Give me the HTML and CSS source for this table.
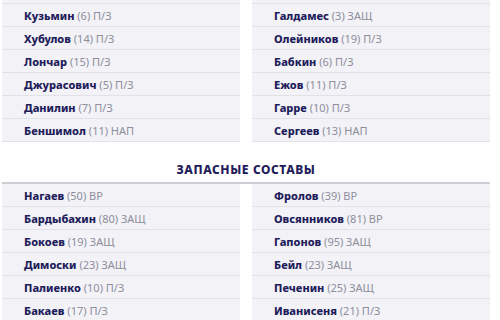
FILE: index.html
```html
<!DOCTYPE html>
<html lang="ru">
<head>
<meta charset="utf-8">
<link rel="stylesheet" href="styles.css">
</head>
<body>
<div class="page">
  <div class="cols">
    <ul class="list">
      <li class="row cut"></li>
      <li class="row"><b>Кузьмин</b> <span>(6) П/З</span></li>
      <li class="row"><b>Хубулов</b> <span>(14) П/З</span></li>
      <li class="row"><b>Лончар</b> <span>(15) П/З</span></li>
      <li class="row"><b>Джурасович</b> <span>(5) П/З</span></li>
      <li class="row"><b>Данилин</b> <span>(7) П/З</span></li>
      <li class="row"><b>Беншимол</b> <span>(11) НАП</span></li>
    </ul>
    <ul class="list">
      <li class="row cut"></li>
      <li class="row"><b>Галдамес</b> <span>(3) ЗАЩ</span></li>
      <li class="row"><b>Олейников</b> <span>(19) П/З</span></li>
      <li class="row"><b>Бабкин</b> <span>(6) П/З</span></li>
      <li class="row"><b>Ежов</b> <span>(11) П/З</span></li>
      <li class="row"><b>Гарре</b> <span>(10) П/З</span></li>
      <li class="row"><b>Сергеев</b> <span>(13) НАП</span></li>
    </ul>
  </div>
  <h2 class="title">ЗАПАСНЫЕ СОСТАВЫ</h2>
  <div class="cols">
    <ul class="list">
      <li class="row"><b>Нагаев</b> <span>(50) ВР</span></li>
      <li class="row"><b>Бардыбахин</b> <span>(80) ЗАЩ</span></li>
      <li class="row"><b>Бокоев</b> <span>(19) ЗАЩ</span></li>
      <li class="row"><b>Димоски</b> <span>(23) ЗАЩ</span></li>
      <li class="row"><b>Палиенко</b> <span>(10) П/З</span></li>
      <li class="row"><b>Бакаев</b> <span>(17) П/З</span></li>
    </ul>
    <ul class="list">
      <li class="row"><b>Фролов</b> <span>(39) ВР</span></li>
      <li class="row"><b>Овсянников</b> <span>(81) ВР</span></li>
      <li class="row"><b>Гапонов</b> <span>(95) ЗАЩ</span></li>
      <li class="row"><b>Бейл</b> <span>(23) ЗАЩ</span></li>
      <li class="row"><b>Печенин</b> <span>(25) ЗАЩ</span></li>
      <li class="row"><b>Иванисеня</b> <span>(21) П/З</span></li>
    </ul>
  </div>
</div>
</body>
</html>
```
FILE: styles.css
```css
html, body {
  margin: 0;
  padding: 0;
  background: #ffffff;
}
body {
  font-family: "Noto Sans", "Open Sans", sans-serif;
  font-size: 11px;
  overflow: hidden;
}
.page {
  width: 488px;
  margin-left: 2px;
}
.cols {
  display: grid;
  grid-template-columns: 238px 238px;
  column-gap: 12px;
}
.list {
  list-style: none;
  margin: 0;
  padding: 0;
}
.row {
  height: 21px;
  padding-top: 1px;
  line-height: 22px;
  padding-left: 22px;
  background: #f2f2f7;
  border-bottom: 1px solid #e1e1e8;
  white-space: nowrap;
}
.row.cut {
  height: 3px;
  padding-top: 0;
}
.row b {
  font-weight: 800;
  color: #1f1d5a;
}
.row span {
  color: #8e8e9c;
}
.title {
  margin: 0;
  height: 40px;
  line-height: 55px;
  text-align: center;
  font-size: 12px;
  font-weight: 800;
  color: #1f1d5a;
  letter-spacing: 0.6px;
  border-bottom: 2px solid #cdcdd3;
}
```
